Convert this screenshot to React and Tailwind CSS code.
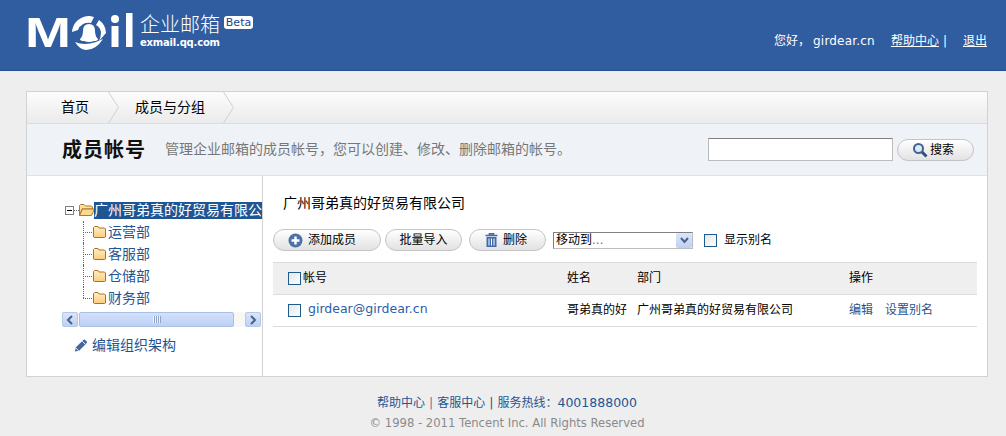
import React from "react";

const FONT = "font-['DejaVu_Sans','Noto_Sans_CJK_SC',sans-serif]";

function Logo() {
  return (
    <svg width="112" height="62" viewBox="24 0 112 62" className="shrink-0">
      <text x="25" y="47" fill="#fff" fontFamily="Liberation Sans" fontWeight="700" fontSize="42" textLength="46" lengthAdjust="spacingAndGlyphs">M</text>
      <path d="M72 32 A17 17 0 0 1 90 16 L94 17 L91 23 A11 11 0 0 0 78 30 Z" fill="#fff" />
      <path d="M99 20 A17 17 0 0 1 106 33 L99 41 Q101 37 101 32 Q100 27 96 25 Z" fill="#fff" />
      <path d="M75 42 Q84 46 96 42 L103 39 Q96 50 86 50 Q79 49 75 42Z" fill="#fff" />
      <path d="M89 24 Q95 24 95 31 Q95 36 98 39 Q98 41 94 41 Q89 43 84 41 Q80 41 80 39 Q83 36 83 31 Q83 24 89 24Z" fill="#fff" />
      <circle cx="115" cy="19" r="4" fill="#fff" />
      <rect x="111.5" y="26" width="7" height="21" fill="#fff" />
      <rect x="126" y="13" width="6.5" height="34" fill="#fff" />
    </svg>
  );
}

function Chevron() {
  return (
    <svg width="11" height="32" viewBox="0 0 11 32" className="shrink-0">
      <path d="M0.5 0 L10.5 15.5 L0.5 31" fill="none" stroke="#cfcfcf" />
    </svg>
  );
}

function OpenFolder() {
  return (
    <svg width="16" height="12" viewBox="0 0 16 12" className="shrink-0">
      <path d="M0.5 11.5V1.5L1.5 .5H5L6.5 2H12.5L13.5 3V5H3L0.5 11.5Z" fill="#fde2a0" stroke="#b5752a" />
      <path d="M0.5 11.5L3.5 5H15.5L12.5 11.5Z" fill="#fbd98c" stroke="#b5752a" />
    </svg>
  );
}

function Folder() {
  return (
    <svg width="13" height="12" viewBox="0 0 13 12" className="shrink-0">
      <defs>
        <linearGradient id="fld" x1="0" y1="0" x2="0" y2="1">
          <stop offset="0" stopColor="#fff0c4" />
          <stop offset="1" stopColor="#fbcb7a" />
        </linearGradient>
      </defs>
      <path d="M0.5 11V1.5L1.5 .5H5L6 2H11.5L12.5 3V11L11.5 11.5H1.5Z" fill="url(#fld)" stroke="#b06f24" />
    </svg>
  );
}

function PillButton({ w, pad = "justify-center", children }) {
  return (
    <button className={`${w} ${pad} h-[22px] flex items-center rounded-full border border-[#c4c4c4] bg-gradient-to-b from-[#ffffff] to-[#e2e2e2] text-[12px] text-black`}>
      {children}
    </button>
  );
}

function Check({ mr = "" }) {
  return <span className={`${mr} inline-block w-[13px] h-[13px] shrink-0 border border-[#1f5a8c] bg-gradient-to-br from-[#e6e6e6] to-[#ffffff]`} />;
}

function TreeChild({ label, last }) {
  return (
    <div className="relative flex items-center h-[22px] pl-[31px]">
      <span className={`absolute left-[21px] top-0 w-0 border-l border-dotted border-[#666] ${last ? "h-[11px]" : "h-[22px]"}`} />
      <span className="absolute left-[21px] top-[11px] w-[9px] border-t border-dotted border-[#666]" />
      <Folder />
      <span className="ml-[2px] text-[14px] text-[#1f5593]">{label}</span>
    </div>
  );
}

function ScrollArrow({ left }) {
  return (
    <span className="flex items-center justify-center w-[16px] h-[15px] rounded-[2px] border border-[#b4c8e8] bg-gradient-to-b from-[#dbe6fb] to-[#bdd0f4]">
      <svg width="8" height="10" viewBox="0 0 8 10">
        <path d={left ? "M6 1L2 5L6 9" : "M2 1L6 5L2 9"} fill="none" stroke="#4d6185" strokeWidth="2" />
      </svg>
    </span>
  );
}

export default function App() {
  return (
    <div className={`${FONT} w-[1006px] h-[436px] overflow-hidden bg-[#eeeeee] text-[12px] text-black`}>
      <header className="h-[71px] bg-[#305ca0] border-b border-[#23508f] flex pl-[24px] pr-[19px]">
        <div className="flex items-start">
          <Logo />
          <div className="ml-[4px] pt-[14px] text-white">
            <div className="text-[20px] leading-[23px] font-light whitespace-nowrap">企业邮箱</div>
            <div className="text-[10px] leading-[11px] font-bold tracking-[-0.2px]">exmail.qq.com</div>
          </div>
          <span className="ml-[4px] mt-[16px] w-[29px] h-[13px] text-center rounded-[3px] bg-white text-[#1f3f92] text-[11px] leading-[13px]">Beta</span>
        </div>
        <div className="ml-auto flex items-center pt-[12px] text-white text-[12px]">
          <span>您好，<span className="ml-[3px] tracking-[0.2px]">girdear.cn</span></span>
          <a className="ml-[16px] underline">帮助中心</a>
          <span className="ml-[4px]">|</span>
          <a className="ml-[16px] underline">退出</a>
        </div>
      </header>

      <main className="ml-[26px] mt-[20px] w-[962px] h-[286px] bg-white border border-[#d2d2d2] flex flex-col">
        <nav className="h-[32px] shrink-0 flex items-center pl-[34px] bg-gradient-to-b from-[#fcfcfc] to-[#ebebeb] border-b border-[#dcdcdc] text-[14px]">
          <span>首页</span>
          <span className="ml-[19px]"><Chevron /></span>
          <span className="ml-[16px]">成员与分组</span>
          <span className="ml-[18px]"><Chevron /></span>
        </nav>
        <section className="h-[52px] shrink-0 flex items-center pl-[35px] pr-[13px] bg-[#eff3f8] border-b border-[#e2e2e2]">
          <h1 className="text-[20px] font-bold tracking-[1px] text-[#111] leading-none">成员帐号</h1>
          <p className="ml-[19px] text-[14px] text-[#777]">管理企业邮箱的成员帐号，您可以创建、修改、删除邮箱的帐号。</p>
          <input className="ml-auto w-[185px] h-[23px] bg-white border border-[#bcbcbc] border-t-[#808080]" />
          <div className="ml-[4px]">
            <PillButton w="w-[77px]" pad="pl-[14px] gap-[2px]">
              <svg width="16" height="16" viewBox="0 0 16 16">
                <circle cx="6.5" cy="6.5" r="4.5" fill="#dfe8f5" stroke="#3f6299" strokeWidth="2" />
                <path d="M10 10L14.5 14.5" stroke="#2f4f80" strokeWidth="3" />
              </svg>
              <span>搜索</span>
            </PillButton>
          </div>
        </section>

        <div className="flex-1 min-h-0 flex">
          <aside className="w-[236px] shrink-0 border-r border-[#d2d2d2] pl-[35px] pt-[23px]">
            <div className="w-[200px] overflow-hidden">
              <div className="flex items-center h-[22px] pl-[3px]">
                <span className="flex items-center justify-center w-[9px] h-[9px] border border-[#808080] shrink-0">
                  <span className="w-[5px] h-px bg-black" />
                </span>
                <span className="w-[5px] border-t border-dotted border-[#666]" />
                <OpenFolder />
                <span className="ml-[-1px] flex-1 h-[17px] leading-[17px] overflow-hidden whitespace-nowrap bg-[#1f5593] text-white text-[14px]">广州哥弟真的好贸易有限公司</span>
              </div>
              <TreeChild label="运营部" />
              <TreeChild label="客服部" />
              <TreeChild label="仓储部" />
              <TreeChild label="财务部" last />
            </div>
            <div className="w-[199px] h-[15px] mt-[3px] flex bg-[#f8f8f4]">
              <ScrollArrow left />
              <span className="ml-[1px] w-[155px] h-[15px] flex items-center justify-center rounded-[2px] border border-[#a9c0e6] bg-gradient-to-b from-[#d3e0fa] to-[#bdd0f4]">
                <span className="w-[8px] h-[7px] bg-[repeating-linear-gradient(90deg,#eef3fd_0_1px,#8fa5cb_1px_2px)]" />
              </span>
              <span className="flex-1" />
              <ScrollArrow />
            </div>
            <a className="mt-[9px] ml-[12px] h-[18px] flex items-center gap-[4px] text-[14px] text-[#1f5593]">
              <svg width="14" height="15" viewBox="0 0 15 15">
                <path d="M1 14L2 9.5L10 1.5Q11 .5 12 1.5L13.5 3Q14.5 4 13.5 5L5.5 13Z" fill="#44689f" />
                <path d="M1.8 10L5 13.2" stroke="#fff" />
                <path d="M9 3L12 6" stroke="#fff" />
              </svg>
              <span>编辑组织架构</span>
            </a>
          </aside>

          <div className="flex-1 min-w-0 pl-[10px] pr-[10px]">
            <h2 className="pl-[10px] pt-[17px] h-[53px] text-[14px] leading-[20px] font-normal">广州哥弟真的好贸易有限公司</h2>
            <div className="flex items-center h-[22px]">
              <PillButton w="w-[108px]" pad="pl-[14px] gap-[5px]">
                <svg width="15" height="15" viewBox="0 0 15 15">
                  <circle cx="7.5" cy="7.5" r="7" fill="#4d72a8" />
                  <path d="M7.5 3.5V11.5M3.5 7.5H11.5" stroke="#fff" strokeWidth="2.4" />
                </svg>
                <span>添加成员</span>
              </PillButton>
              <div className="ml-[4px]"><PillButton w="w-[77px]">批量导入</PillButton></div>
              <div className="ml-[7px]">
                <PillButton w="w-[77px]" pad="pl-[15px] gap-[5px]">
                  <svg width="13" height="14" viewBox="0 0 13 14">
                    <path d="M0.5 2.5H12.5M4.5 2V.8H8.5V2" fill="none" stroke="#3f6ca6" strokeWidth="1.6" />
                    <path d="M1.5 4H11.5V14H1.5Z" fill="#3f6ca6" />
                    <path d="M4 5.5V12.5M6.5 5.5V12.5M9 5.5V12.5" stroke="#fff" />
                  </svg>
                  <span>删除</span>
                </PillButton>
              </div>
              <div className="ml-[7px] w-[140px] h-[17px] flex items-center border border-[#bcbcbc] border-t-[#808080] border-l-[#808080] bg-white">
                <span className="pl-[2px] flex-1 text-[12px]">移动到<span className="text-[#b06a00]">...</span></span>
                <span className="flex items-center justify-center w-[16px] h-[15px] rounded-[2px] bg-gradient-to-b from-[#dbe6fb] to-[#bdd0f4]">
                  <svg width="9" height="7" viewBox="0 0 9 7"><path d="M1 1L4.5 5L8 1" fill="none" stroke="#4d6185" strokeWidth="2" /></svg>
                </span>
              </div>
              <Check mr="ml-[11px] mr-[7px]" />
              <span>显示别名</span>
            </div>

            <div className="mt-[11px] w-[704px] h-[33px] grid grid-cols-[294px_70px_212px_1fr] items-center bg-[#efefef] border-y border-[#dcdcdc]">
              <span className="pl-[15px] flex items-center"><Check mr="mr-[2px]" /><span className="pb-[2px]">帐号</span></span>
              <span className="pb-[2px]">姓名</span>
              <span className="pb-[2px]">部门</span>
              <span className="pb-[2px]">操作</span>
            </div>
            <div className="w-[704px] h-[32px] grid grid-cols-[294px_70px_212px_1fr] items-center border-b border-[#dcdcdc]">
              <span className="pl-[15px] flex items-center text-[#2a5ea8] text-[12.5px]"><Check mr="mr-[7px]" /><span className="pb-[2px]">girdear@girdear.cn</span></span>
              <span className="pb-[2px]">哥弟真的好</span>
              <span className="pb-[2px]">广州哥弟真的好贸易有限公司</span>
              <span className="pb-[2px] text-[#1f5593]">编辑<span className="ml-[12px]">设置别名</span></span>
            </div>
          </div>
        </div>
      </main>

      <footer className="mt-[16px] pl-[8px] flex flex-col items-center">
        <div className="text-[12.5px] leading-[20px] text-[#1f5593]"><span className="text-[12px]">帮助中心</span><span className="mx-[4px] text-[#8c6b8c]">|</span><span className="text-[12px]">客服中心</span><span className="mx-[4px]">|</span><span className="text-[12px]">服务热线：</span>4001888000</div>
        <div className="text-[11.6px] leading-[20px] text-[#8a8a8a]">© 1998 - 2011 Tencent Inc. All Rights Reserved</div>
      </footer>
    </div>
  );
}
